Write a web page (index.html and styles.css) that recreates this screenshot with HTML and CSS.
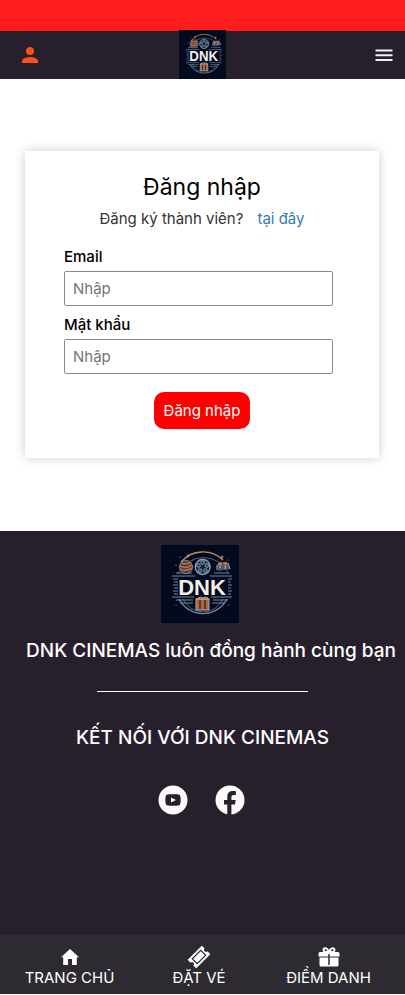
FILE: index.html
```html
<!DOCTYPE html>
<html lang="vi">
<head>
<meta charset="utf-8">
<meta name="viewport" content="width=device-width, initial-scale=1">
<title>DNK Cinemas</title>
<link rel="stylesheet" href="styles.css">
</head>
<body>
<svg class="defs" aria-hidden="true">
  <symbol id="emblem" viewBox="0 0 78 78" preserveAspectRatio="none">
    <rect width="78" height="78" fill="#020a20"/>
    <g fill="none" stroke="#71879b">
      <path d="M17 29A28 28 0 0 1 68 29" stroke-width=".7"/>
      <path d="M20 17A29 29 0 0 1 62 15" stroke="#c98a55" stroke-width="1.3"/>
      <path d="M18 54A27 27 0 0 0 66 54" stroke-width="1.4"/>
      <path d="M22 54A22 22 0 0 0 62 54" stroke-width=".7"/>
      <path d="M11 31H34M49 31H71M15 28H31M53 28H68M11 52H33M50 52H71M15 55H32M52 55H67M19 58H32M51 58H63" stroke-width="1"/>
      <path d="M12 34H17M13 37H17M12 40H17M13 43H17M12 46H17M13 49H17M67 34H71M67 37H70M67 40H71M67 43H70M67 46H71M67 49H70" stroke-width="1"/>
    </g>
    <circle cx="25" cy="22" r="6.5" fill="#3a3b48" stroke="#7890a4"/>
    <path d="M20 18Q25 20 30 17M19 21Q25 24 31 20M19 24Q25 27 31 23" fill="none" stroke="#c66b37" stroke-width="1.7"/>
    <circle cx="41.7" cy="22" r="7.5" fill="#11233e" stroke="#91a2b0" stroke-width="1.3"/>
    <g fill="#344c67" stroke="#91a2b0" stroke-width=".8">
      <circle cx="41.7" cy="17.5" r="1.9"/><circle cx="46" cy="20.5" r="1.9"/><circle cx="44.5" cy="25.6" r="1.9"/><circle cx="39" cy="25.6" r="1.9"/><circle cx="37.5" cy="20.5" r="1.9"/>
    </g>
    <path d="M56 19L66 17L69 24L57 26Z" fill="#425c77"/>
    <path d="M57 19L60 18L59 23M62 18L65 18L64 24" fill="none" stroke="#d78043" stroke-width="1.6"/>
    <path d="M56 20V25M67 18L69 24" stroke="#a3b1bd" stroke-width="1"/>
    <rect x="35" y="54" width="13" height="11" fill="#b56438" stroke="#9daab1"/>
    <path d="M39 55V64M44 55V64" stroke="#2a2c3a" stroke-width="1.5"/>
    <path d="M35 54H48M37 53L40 52L42 53L45 52L47 53" fill="none" stroke="#d9b18c" stroke-width="1"/>
    <g fill="#b6a291">
      <path d="M27 9L27.6 10.4L29 11L27.6 11.6L27 13L26.4 11.6L25 11L26.4 10.4ZM61 10L61.6 11.4L63 12L61.6 12.6L61 14L60.4 12.6L59 12L60.4 11.4Z"/>
      <circle cx="19" cy="12" r=".6"/><circle cx="32" cy="15" r=".5"/><circle cx="67" cy="15" r=".5"/><circle cx="15" cy="20" r=".6"/><circle cx="15" cy="60" r=".5"/><circle cx="68" cy="60" r=".5"/>
    </g>
  </symbol>
</svg>

<div class="strip"></div>
<header class="header">
  <button class="icon-button account" type="button" aria-label="Tài khoản">
    <svg width="16" height="16" viewBox="4 4 16 16" fill="#fc5019"><circle cx="12" cy="8" r="4"/><path d="M12 14c-2.700 0-8 1.300-8 4v2h16v-2c0-2.700-5.300-4-8-4z"/></svg>
  </button>
  <a class="brand" href="#" aria-label="DNK Cinemas">
    <svg viewBox="0 0 78 78" preserveAspectRatio="none"><use href="#emblem"/><text class="emblem-text" x="41" y="50" text-anchor="middle">DNK</text></svg>
  </a>
  <button class="icon-button menu" type="button" aria-label="Menu">
    <svg width="18" height="14" viewBox="0 0 18 14" fill="none" stroke="#f4f0f2" stroke-width="2"><path d="M0.500 2.500H17.500M0.500 7.200H17.500M0.500 11.900H17.500"/></svg>
  </button>
</header>

<main class="main">
  <section class="card">
    <h1 class="title">Đăng nhập</h1>
    <p class="signup"><span>Đăng ký thành viên?</span><a href="#">tại đây</a></p>
    <form class="form">
      <label for="email">Email</label>
      <input id="email" type="email" placeholder="Nhập">
      <label for="password">Mật khẩu</label>
      <input id="password" type="password" placeholder="Nhập">
      <button class="submit" type="button">Đăng nhập</button>
    </form>
  </section>
</main>

<footer class="footer">
  <a class="footer-logo" href="#" aria-label="DNK Cinemas">
    <svg viewBox="0 0 78 78"><use href="#emblem"/><text class="emblem-text" x="41" y="50" text-anchor="middle">DNK</text></svg>
  </a>
  <p class="tagline">DNK CINEMAS luôn đồng hành cùng bạn</p>
  <hr class="rule">
  <h2 class="connect">KẾT NỐI VỚI DNK CINEMAS</h2>
  <div class="social">
    <a href="#" aria-label="YouTube"><svg width="30" height="30" viewBox="0 0 30 30"><circle cx="15" cy="15" r="14.500" fill="#fafafa"/><path d="M15 9.300c5.500 0 6.500.2 7 1.200.5 1.300.7 2.700.7 4.500s-.2 3.200-.7 4.500c-.5 1-1.500 1.200-7 1.200s-6.500-.2-7-1.200c-.5-1.300-.7-2.700-.7-4.500s.2-3.200.7-4.500c.5-1 1.500-1.200 7-1.200z" fill="#281f2d"/><path d="M13 12.500L18 15L13 17.500Z" fill="#fafafa"/></svg></a>
    <a href="#" aria-label="Facebook"><svg width="30" height="30" viewBox="0 0 30 30"><circle cx="15" cy="15" r="14.500" fill="#fafafa"/><path d="M12.300 30V19.500H9V15h3.300v-3c0-4.200 2.200-6 5.700-6 1.200 0 2 .1 2.900.2v3.900h-2c-1.700 0-2.500.7-2.500 2.200V15h4.300l-.7 4.500h-3.600V30z" fill="#281f2d"/></svg></a>
  </div>
</footer>

<nav class="tabs">
  <a href="#"><svg width="24" height="22" viewBox="0 0 24 22"><path d="M12 3L21 11.200H18.800V19H14V13H10V19H5.200V11.200H3Z" fill="#fff"/></svg><span>TRANG CHỦ</span></a>
  <a href="#"><svg width="24" height="22" viewBox="0 0 24 22"><g transform="translate(12 11) rotate(-45)"><path d="M-10-6H10V-2A2 2 0 0 0 10 2V6H-10V2A2 2 0 0 0-10-2Z" fill="#fff"/><rect x="-6" y="-3.500" width="12" height="7" fill="#fff" stroke="#2d2b31" stroke-width="1.200"/></g></svg><span>ĐẶT VÉ</span></a>
  <a href="#"><svg width="24" height="22" viewBox="0 0 24 22"><path d="M3 6H21Q22.500 6 22.500 7.500V10.500H1.500V7.500Q1.500 6 3 6ZM2.500 11.500H21.500V19Q21.500 20.500 20 20.500H4Q2.500 20.500 2.500 19Z" fill="#fff"/><path d="M11.500 5C10 1.500 6.500 1.500 6.500 4S10 6 12 6S17.500 6.500 17.500 4S14 1.500 12.500 5" fill="none" stroke="#fff" stroke-width="2"/><path d="M12 8V19" stroke="#2d2b31" stroke-width="1.500"/></svg><span>ĐIỂM DANH</span></a>
</nav>
</body>
</html>
```
FILE: styles.css
```css
* { box-sizing: border-box; }

body {
  margin: 0;
  background: #fff;
  color: #000;
  font: 400 16px/24px Inter, "Open Sans", sans-serif;
}

a { text-decoration: none; }
svg { display: block; }
h1, h2, p { margin: 0; }

.defs { position: absolute; width: 0; height: 0; }

.emblem-text {
  fill: #f3eee6;
  font: 700 22px "Liberation Sans", sans-serif;
}

.strip { height: 30px; background: #ff1c1c; }

.header {
  display: grid;
  grid-template-columns: 1fr 47px 1fr;
  align-items: center;
  background: linear-gradient(#ff1c1c 1px, #281f2d 1px);
}

.icon-button {
  padding: 0;
  border: 0;
  background: none;
  cursor: pointer;
}

.account { justify-self: start; margin-left: 22px; }
.menu { justify-self: end; margin-right: 12px; }
.brand svg { width: 47px; height: 49px; }

.main { padding: 72px 26px 73px 25px; }

.card {
  padding: 22px 46px 29px 39px;
  background: #fff;
  box-shadow: 0 0 10px rgba(0, 0, 0, .2);
}

.title {
  font-size: 23px;
  line-height: 28px;
  font-weight: 400;
  text-align: center;
  margin-right: -7px;
}

.signup {
  display: flex;
  justify-content: center;
  gap: 14px;
  margin: 6px -7px 0 0;
  color: #333;
  font-size: 15px;
  white-space: nowrap;
}

.signup a { color: #337ab7; }

.form {
  display: flex;
  flex-direction: column;
  margin-top: 14px;
}

.form label {
  font-size: 15px;
  font-weight: 500;
}

.form input {
  width: 100%;
  height: 35px;
  margin: 2px 0 7px;
  padding: 0 8px;
  border: 1px solid #8a8a8a;
  border-radius: 2px;
  background: #fff;
  font: 400 15px Inter, sans-serif;
}

.form input::placeholder { color: #757575; }

.submit {
  align-self: center;
  height: 37px;
  margin: 11px 0 0 7px;
  padding: 0 10px;
  border: 0;
  border-radius: 10px;
  background: #f00;
  color: #fff;
  font: 400 15px Inter, sans-serif;
}

.footer {
  display: flex;
  flex-direction: column;
  align-items: center;
  padding: 14px 0 120px;
  background: #281f2d;
  color: #fff;
}

.footer-logo { margin-right: 5px; }
.footer-logo svg { width: 78px; height: 78px; }

.tagline {
  margin: 16px 0 0 17px;
  font-size: 19px;
  font-weight: 500;
  white-space: nowrap;
}

.rule {
  width: 52%;
  height: 1px;
  margin: 28px 0 34px;
  border: 0;
  background: #fff;
}

.connect {
  font-size: 19px;
  line-height: 24px;
  font-weight: 500;
}

.social {
  display: flex;
  gap: 27px;
  margin: 35px 2px 0 0;
}

.tabs {
  display: grid;
  grid-template-columns: 139fr 120fr 139fr;
  height: 59px;
  padding: 11px 7px 0 0;
  background: #2d2b31;
}

.tabs a {
  display: flex;
  flex-direction: column;
  align-items: center;
  color: #fff;
  font-size: 15px;
  line-height: 20px;
}
```
